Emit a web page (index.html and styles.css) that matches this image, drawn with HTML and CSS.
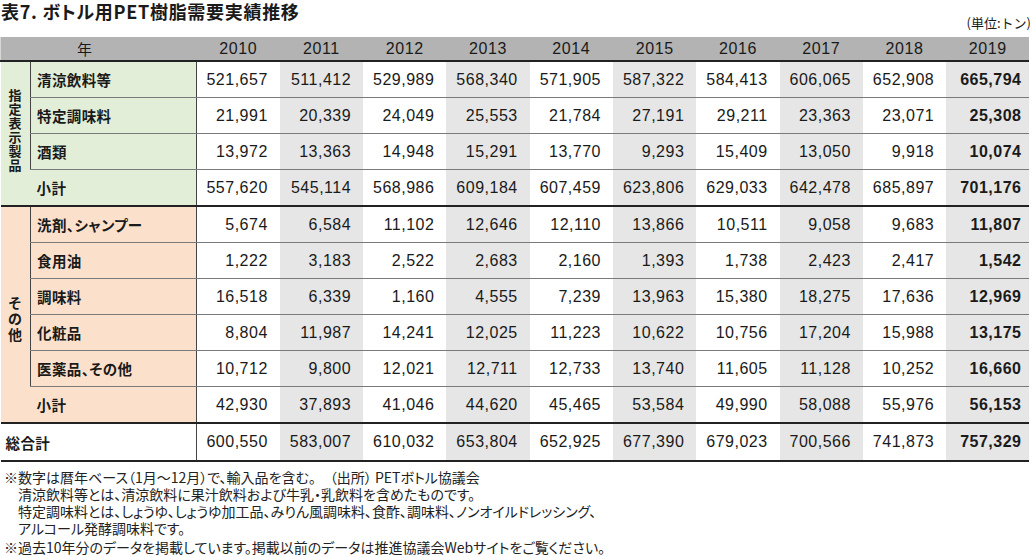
FILE: index.html
```html
<!DOCTYPE html>
<html lang="ja">
<head>
<meta charset="utf-8">
<link rel="stylesheet" href="styles.css">
</head>
<body>
<div class="page">
  <div class="head">
    <h1 class="title">表7. ボトル用PET樹脂需要実績推移</h1>
    <div class="unit">(単位:トン)</div>
  </div>
  <table class="tbl">
    <colgroup>
      <col class="c-cat"><col class="c-lab">
      <col class="c-y"><col class="c-y"><col class="c-y"><col class="c-y"><col class="c-y">
      <col class="c-y"><col class="c-y"><col class="c-y"><col class="c-y"><col class="c-y">
    </colgroup>
    <thead>
      <tr class="hrow">
        <th colspan="2" class="h-year">年</th>
        <th>2010</th><th>2011</th><th>2012</th><th>2013</th><th>2014</th>
        <th>2015</th><th>2016</th><th>2017</th><th>2018</th><th>2019</th>
      </tr>
    </thead>
    <tbody class="grp green">
      <tr>
        <td rowspan="4" class="cat"><div class="vt"><span>指</span><span>定</span><span>表</span><span>示</span><span>製</span><span>品</span></div></td>
        <td class="lab bl">清涼飲料等</td>
        <td>521,657</td><td>511,412</td><td>529,989</td><td>568,340</td><td>571,905</td><td>587,322</td><td>584,413</td><td>606,065</td><td>652,908</td><td>665,794</td>
      </tr>
      <tr>
        <td class="lab bl">特定調味料</td>
        <td>21,991</td><td>20,339</td><td>24,049</td><td>25,553</td><td>21,784</td><td>27,191</td><td>29,211</td><td>23,363</td><td>23,071</td><td>25,308</td>
      </tr>
      <tr>
        <td class="lab bl">酒類</td>
        <td>13,972</td><td>13,363</td><td>14,948</td><td>15,291</td><td>13,770</td><td>9,293</td><td>15,409</td><td>13,050</td><td>9,918</td><td>10,074</td>
      </tr>
      <tr class="last">
        <td class="lab">小計</td>
        <td>557,620</td><td>545,114</td><td>568,986</td><td>609,184</td><td>607,459</td><td>623,806</td><td>629,033</td><td>642,478</td><td>685,897</td><td>701,176</td>
      </tr>
    </tbody>
    <tbody class="grp orange">
      <tr>
        <td rowspan="6" class="cat"><div class="vt vt2"><span>そ</span><span>の</span><span>他</span></div></td>
        <td class="lab bl">洗剤、シャンプー</td>
        <td>5,674</td><td>6,584</td><td>11,102</td><td>12,646</td><td>12,110</td><td>13,866</td><td>10,511</td><td>9,058</td><td>9,683</td><td>11,807</td>
      </tr>
      <tr>
        <td class="lab bl">食用油</td>
        <td>1,222</td><td>3,183</td><td>2,522</td><td>2,683</td><td>2,160</td><td>1,393</td><td>1,738</td><td>2,423</td><td>2,417</td><td>1,542</td>
      </tr>
      <tr>
        <td class="lab bl">調味料</td>
        <td>16,518</td><td>6,339</td><td>1,160</td><td>4,555</td><td>7,239</td><td>13,963</td><td>15,380</td><td>18,275</td><td>17,636</td><td>12,969</td>
      </tr>
      <tr>
        <td class="lab bl">化粧品</td>
        <td>8,804</td><td>11,987</td><td>14,241</td><td>12,025</td><td>11,223</td><td>10,622</td><td>10,756</td><td>17,204</td><td>15,988</td><td>13,175</td>
      </tr>
      <tr>
        <td class="lab bl">医薬品、その他</td>
        <td>10,712</td><td>9,800</td><td>12,021</td><td>12,711</td><td>12,733</td><td>13,740</td><td>11,605</td><td>11,128</td><td>10,252</td><td>16,660</td>
      </tr>
      <tr class="last">
        <td class="lab">小計</td>
        <td>42,930</td><td>37,893</td><td>41,046</td><td>44,620</td><td>45,465</td><td>53,584</td><td>49,990</td><td>58,088</td><td>55,976</td><td>56,153</td>
      </tr>
    </tbody>
    <tbody class="grp total">
      <tr class="last">
        <td colspan="2" class="lab tot">総合計</td>
        <td>600,550</td><td>583,007</td><td>610,032</td><td>653,804</td><td>652,925</td><td>677,390</td><td>679,023</td><td>700,566</td><td>741,873</td><td>757,329</td>
      </tr>
    </tbody>
  </table>
  <div class="notes">
    <p class="n1">※数字は暦年ベース（1月～12月）で、輸入品を含む。　（出所） PETボトル協議会</p>
    <p class="ni">清涼飲料等とは、清涼飲料に果汁飲料および牛乳・乳飲料を含めたものです。</p>
    <p class="ni">特定調味料とは、しょうゆ、しょうゆ加工品、みりん風調味料、食酢、調味料、ノンオイルドレッシング、</p>
    <p class="ni">アルコール発酵調味料です。</p>
    <p class="n5">※過去10年分のデータを掲載しています。掲載以前のデータは推進協議会Webサイトをご覧ください。</p>
  </div>
</div>
</body>
</html>
```

FILE: styles.css
```css
html, body {
  margin: 0;
  padding: 0;
  background: #ffffff;
}
body {
  font-family: "Liberation Sans", "Noto Sans CJK JP", sans-serif;
  color: #1a1a1a;
}
.page {
  width: 1033px;
}
.head {
  display: flex;
  justify-content: space-between;
  align-items: flex-start;
  height: 37px;
}
.title {
  margin: 0;
  padding: 0 0 0 1px;
  font-family: "Noto Sans CJK JP", sans-serif;
  font-feature-settings: "palt" 1;
  font-size: 18px;
  font-weight: 700;
  line-height: 22px;
  letter-spacing: 0.7px;
}
.unit {
  font-family: "Noto Sans CJK JP", sans-serif;
  font-size: 13px;
  line-height: 15px;
  margin-top: 15px;
  margin-right: 2px;
}
.tbl {
  border-collapse: collapse;
  table-layout: fixed;
  width: 1029px;
}
.c-cat { width: 30px; }
.c-lab { width: 166px; }
.c-y { width: 83.3px; }
.c-y:nth-child(even) { background: #e6e6e6; }

.tbl th {
  background: #b3b3b3;
  font-weight: 400;
  font-size: 16px;
  letter-spacing: 0.6px;
  height: 23px;
  padding: 0;
  text-align: center;
  border-bottom: 2px solid #222;
  color: #1a1a1a;
}
.tbl th.h-year {
  font-family: "Noto Sans CJK JP", sans-serif;
  font-size: 15px;
  padding-right: 28px;
  border-left: 1px solid #d8d8d8;
}
.tbl td {
  height: 35px;
  padding: 0 12px 0 0;
  text-align: right;
  font-size: 16px;
  letter-spacing: 0.5px;
  border-bottom: 1px solid #7a7a7a;
  white-space: nowrap;
}
.tbl td:last-child {
  font-weight: 700;
  padding-right: 8px;
}
.tbl tr.last td {
  border-bottom: 2px solid #222;
}
.tbl td.lab {
  text-align: left;
  padding: 0 0 0 6px;
  font-family: "Noto Sans CJK JP", sans-serif;
  font-feature-settings: "palt" 1;
  font-weight: 700;
  font-size: 14.5px;
  letter-spacing: 0.4px;
  border-right: 1px solid #444;
}
.tbl td.bl {
  border-left: 1px solid #444;
}
.tbl td.cat {
  padding: 0;
  text-align: center;
  vertical-align: middle;
  border-bottom: 2px solid #222;
}
.vt {
  display: flex;
  flex-direction: column;
  align-items: center;
  margin-top: -7px;
  font-family: "Noto Sans CJK JP", sans-serif;
  font-weight: 700;
  font-size: 13px;
}
.vt span {
  display: block;
  height: 14px;
  line-height: 14px;
}
.vt2 {
  margin-top: 6px;
}
.vt2 span {
  height: 16px;
  line-height: 16px;
  font-size: 14px;
}
.green .cat, .green .lab { background: #e2eed8; }
.orange .cat, .orange .lab { background: #fbe1cc; }
.total .lab { background: #ffffff; }
.tbl td.tot {
  padding-left: 5px;
}
.total td { height: 36px; }

.notes {
  font-family: "Noto Sans CJK JP", sans-serif;
  font-feature-settings: "palt" 1;
  font-size: 14px;
  color: #222;
  padding-top: 7px;
}
.notes p {
  margin: 0;
  line-height: 17px;
}
.notes .n1 { padding-left: 4px; }
.notes .ni { padding-left: 18px; }
.notes .n5 { padding-left: 4px; margin-top: 2px; }
```
